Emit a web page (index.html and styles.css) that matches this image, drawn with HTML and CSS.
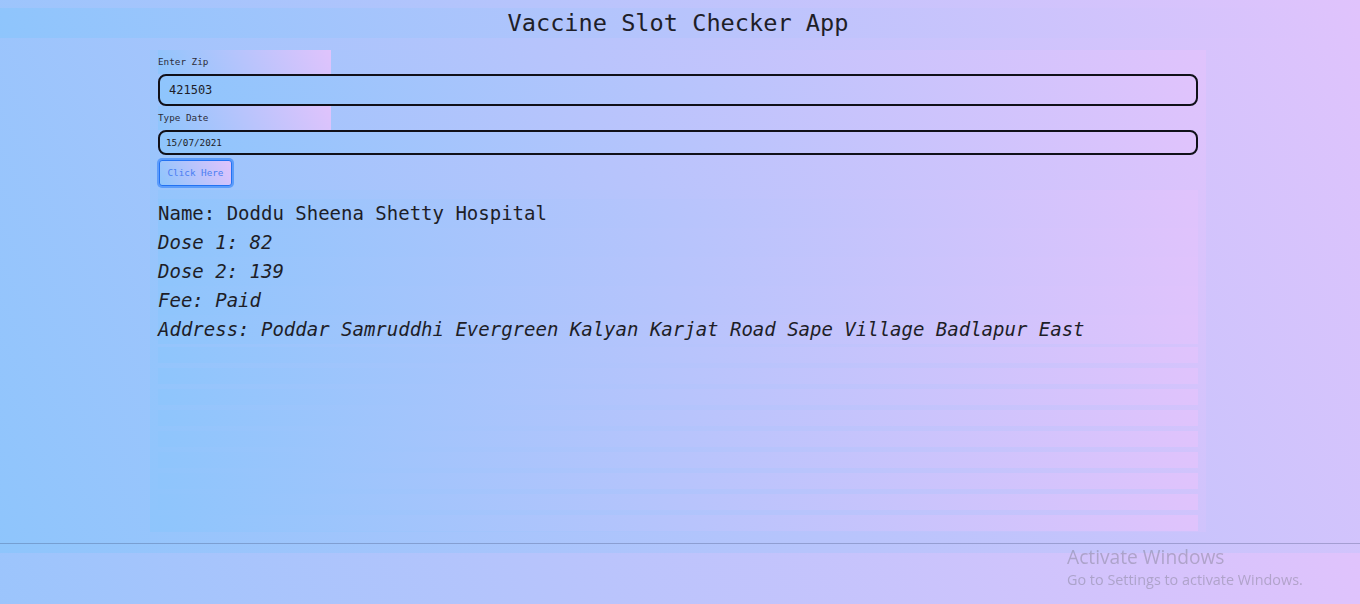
FILE: index.html
```html
<!DOCTYPE html>
<html lang="en">
<head>
<meta charset="utf-8">
<title>Vaccine Slot Checker App</title>
<link rel="stylesheet" href="styles.css">
</head>
<body>
<h1 class="title">Vaccine Slot Checker App</h1>
<main class="container">
  <form class="form">
    <label class="lbl" for="zip">Enter Zip</label>
    <input class="field field-zip" id="zip" type="text" value="421503">
    <label class="lbl" for="date">Type Date</label>
    <input class="field field-date" id="date" type="text" value="15/07/2021">
    <button class="btn" type="button">Click Here</button>
  </form>
  <section class="results">
    <p class="line">Name: Doddu Sheena Shetty Hospital</p>
    <p class="line em">Dose 1: 82</p>
    <p class="line em">Dose 2: 139</p>
    <p class="line em">Fee: Paid</p>
    <p class="line em">Address: Poddar Samruddhi Evergreen Kalyan Karjat Road Sape Village Badlapur East</p>
  </section>
  <div class="slots">
    <div class="slot"></div>
    <div class="slot"></div>
    <div class="slot"></div>
    <div class="slot"></div>
    <div class="slot"></div>
    <div class="slot"></div>
    <div class="slot"></div>
    <div class="slot"></div>
    <div class="slot"></div>
  </div>
</main>
<hr class="rule">
<div class="watermark">
  <div class="wm-title">Activate Windows</div>
  <div class="wm-sub">Go to Settings to activate Windows.</div>
</div>
</body>
</html>
```
FILE: styles.css
```css
html {
  background-color: #8ec5fc;
  background-image: linear-gradient(62deg, #8ec5fc 0%, #e0c3fc 100%);
}

body {
  margin: 0;
  padding: 8px 0;
  font-family: "DejaVu Sans Mono", "Liberation Mono", monospace;
  color: #1e1e28;
}

.title {
  margin: 0;
  height: 30px;
  line-height: 30px;
  font-size: 23.6px;
  font-weight: normal;
  text-align: center;
  padding-right: 4px;
  background-image: linear-gradient(62deg, #8ec5fc 0%, #e0c3fc 100%);
}

.container {
  width: 1040px;
  margin: 12px 0 0 150px;
  padding: 0 8px 1px;
  background-image: linear-gradient(62deg, #8ec5fc 0%, #e0c3fc 100%);
}

.form {
  display: flex;
  flex-direction: column;
  align-items: flex-start;
}

.lbl {
  display: block;
  width: 173px;
  height: 24px;
  line-height: 24px;
  font-size: 9.3px;
  color: #2c2c3a;
  background-image: linear-gradient(62deg, #8ec5fc 0%, #e0c3fc 100%);
}

.field {
  box-sizing: border-box;
  width: 1040px;
  margin: 0;
  border: 2px solid #101018;
  border-radius: 8px;
  font-family: "DejaVu Sans Mono", "Liberation Mono", monospace;
  color: #1e1e28;
  background-image: linear-gradient(62deg, #8ec5fc 0%, #e0c3fc 100%);
  outline: none;
}

.field-zip {
  height: 32px;
  padding: 0 9px;
  font-size: 12px;
}

.field-date {
  height: 25px;
  padding: 0 6px;
  font-size: 9.3px;
}

.btn {
  box-sizing: border-box;
  width: 73px;
  height: 26px;
  margin: 5px 0 0 1px;
  padding: 0 0 1px;
  border: 1px solid #2372f2;
  border-radius: 3px;
  box-shadow: 0 0 0 2px #5b9cfb;
  font-family: "DejaVu Sans Mono", "Liberation Mono", monospace;
  font-size: 9.3px;
  color: #4a7ef2;
  background-image: linear-gradient(62deg, #8ec5fc 0%, #e0c3fc 100%);
}

.results {
  margin-top: 4px;
  padding-top: 9px;
  background-image: linear-gradient(62deg, #8ec5fc 0%, #e0c3fc 100%);
}

.line {
  margin: 0;
  height: 29px;
  line-height: 29px;
  font-size: 19px;
  white-space: nowrap;
  background-image: linear-gradient(62deg, #8ec5fc 0%, #e0c3fc 100%);
}

.em {
  font-style: italic;
}

.slots {
  display: flex;
  flex-direction: column;
  gap: 5px;
  margin-top: 3px;
}

.slot {
  height: 16px;
  background-image: linear-gradient(62deg, #8ec5fc 0%, #e0c3fc 100%);
}

.rule {
  height: 0;
  margin: 11px 0 1px;
  border: 0;
  border-top: 1px solid rgba(50, 60, 100, 0.28);
}

.watermark {
  position: fixed;
  left: 1067px;
  top: 545px;
  font-family: "Open Sans", "Noto Sans", sans-serif;
  color: rgba(110, 110, 120, 0.38);
}

.wm-title {
  font-size: 19.2px;
  line-height: 24px;
}

.wm-sub {
  font-size: 14.4px;
  line-height: 22px;
}
```
